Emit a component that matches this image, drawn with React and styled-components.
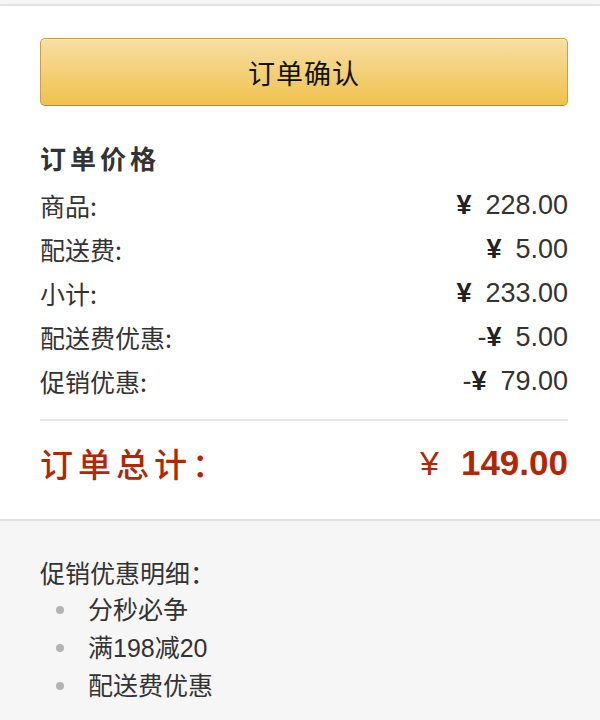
import React from 'react';
import styled, { createGlobalStyle } from 'styled-components';

const summary = [
  { label: '商品:', sign: '', amount: '228.00' },
  { label: '配送费:', sign: '', amount: '5.00' },
  { label: '小计:', sign: '', amount: '233.00' },
  { label: '配送费优惠:', sign: '-', amount: '5.00' },
  { label: '促销优惠:', sign: '-', amount: '79.00' }
];

const promotions = ['分秒必争', '满198减20', '配送费优惠'];

const App = () => (
  <Page>
    <GlobalStyle />
    <Card>
      <ConfirmButton type="button">订单确认</ConfirmButton>
      <Heading>订单价格</Heading>
      <Rows>
        {summary.map(row => (
          <Row key={row.label}>
            <span>{row.label}</span>
            <Price>
              {row.sign}
              <Yen>¥</Yen>
              {row.amount}
            </Price>
          </Row>
        ))}
      </Rows>
      <Divider />
      <TotalRow>
        <TotalLabel>订单总计：</TotalLabel>
        <TotalPrice>
          <TotalYen>¥</TotalYen>149.00
        </TotalPrice>
      </TotalRow>
    </Card>
    <Details>
      <DetailsTitle>促销优惠明细：</DetailsTitle>
      <PromoList>
        {promotions.map(name => (
          <PromoItem key={name}>{name}</PromoItem>
        ))}
      </PromoList>
    </Details>
  </Page>
);

export default App;

/** styles */

const GlobalStyle = createGlobalStyle`
  body {
    margin: 0;
    background: #fff;
    font-family: "Liberation Sans", "Noto Sans CJK SC", sans-serif;
    color: #333;
  }
`;

const Page = styled.div`
  width: 600px;
  height: 720px;
  overflow: hidden;
  padding-top: 4px;
  box-sizing: border-box;
  background: #f6f6f6;
`;

const Card = styled.div`
  margin: 0 -6px;
  padding: 32px 36px 32px 44px;
  background: #fff;
  border: 2px solid #e2e2e2;
  border-radius: 8px 8px 0 0;
`;

const ConfirmButton = styled.button`
  display: block;
  width: 100%;
  height: 68px;
  border: 1px solid #c9a03f;
  border-bottom-color: #b48d2e;
  border-radius: 5px;
  background: linear-gradient(#f7dfa5, #f0c14b);
  box-shadow: inset 0 1px 0 rgba(255, 255, 255, 0.5);
  font-family: "Noto Sans CJK SC", sans-serif;
  font-size: 27px;
  letter-spacing: 1px;
  color: #111;
  padding: 0;
`;

const Heading = styled.div`
  margin-top: 32px;
  height: 40px;
  line-height: 40px;
  font-family: "Noto Sans CJK SC", sans-serif;
  font-size: 26px;
  font-weight: 700;
  letter-spacing: 4px;
  color: #333;
`;

const Rows = styled.div`
  margin-top: 5px;
  display: flex;
  flex-direction: column;
`;

const Row = styled.div`
  display: flex;
  justify-content: space-between;
  align-items: center;
  height: 44px;
  font-family: "Noto Sans CJK SC", sans-serif;
  font-size: 25px;
  color: #333;
`;

const Price = styled.span`
  font-family: "Liberation Sans", sans-serif;
  font-size: 27px;
  color: #333;
`;

const Yen = styled.span`
  font-size: 27px;
  font-weight: 700;
  color: #222;
  margin-right: 14px;
`;

const Divider = styled.hr`
  margin: 16px 0 0;
  border: 0;
  height: 2px;
  background: #e6e6e6;
`;

const TotalRow = styled.div`
  display: flex;
  justify-content: space-between;
  align-items: center;
  margin-top: 18px;
  height: 48px;
  color: #b12704;
`;

const TotalLabel = styled.span`
  font-family: "Noto Sans CJK SC", sans-serif;
  font-size: 33px;
  font-weight: 500;
  letter-spacing: 5px;
`;

const TotalPrice = styled.span`
  font-family: "Liberation Sans", sans-serif;
  font-size: 35px;
  font-weight: 700;
`;

const TotalYen = styled.span`
  font-size: 34px;
  font-weight: 400;
  margin-right: 22px;
`;

const Details = styled.div`
  padding: 32px 40px 0;
  font-family: "Noto Sans CJK SC", sans-serif;
  font-size: 25px;
  color: #333;
`;

const DetailsTitle = styled.div`
  height: 38px;
  line-height: 38px;
`;

const PromoList = styled.ul`
  margin: 0;
  padding: 0;
  list-style: none;
`;

const PromoItem = styled.li`
  position: relative;
  height: 38px;
  line-height: 38px;
  padding-left: 48px;
  font-family: "Liberation Sans", "Noto Sans CJK SC", sans-serif;

  &::before {
    content: '';
    position: absolute;
    left: 16px;
    top: 15px;
    width: 8px;
    height: 8px;
    border-radius: 50%;
    background: #b3b3b3;
  }
`;
